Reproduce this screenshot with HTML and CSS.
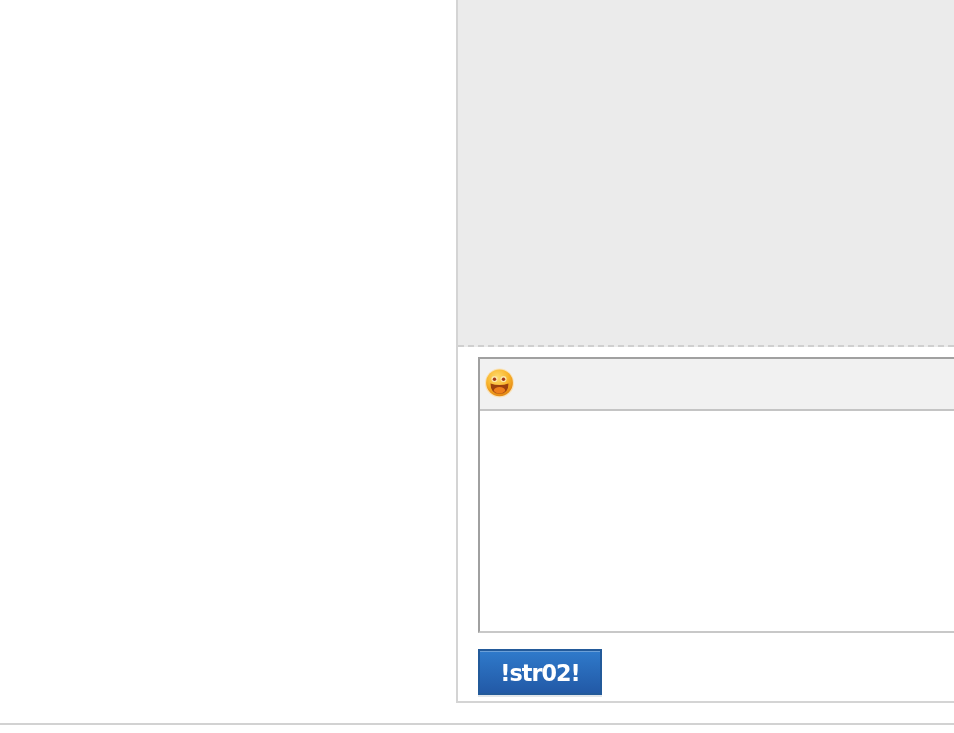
FILE: index.html
```html
<!DOCTYPE html>
<html lang="en">
<head>
<meta charset="utf-8">
<title>Chat</title>
<link rel="stylesheet" href="styles.css">
</head>
<body>
<div class="page">
  <div class="side"></div>
  <div class="panel">
    <div class="messages"></div>
    <div class="compose">
      <div class="editor">
        <div class="toolbar">
          <svg class="smiley" width="30" height="30" viewBox="0 0 30 30" aria-hidden="true">
            <defs>
              <radialGradient id="face" cx="0.42" cy="0.3" r="0.75">
                <stop offset="0" stop-color="#fddc70"/>
                <stop offset="0.55" stop-color="#f9b52c"/>
                <stop offset="1" stop-color="#e07f10"/>
              </radialGradient>
              <filter id="soft" x="-10%" y="-10%" width="120%" height="120%">
                <feGaussianBlur stdDeviation="0.55"/>
              </filter>
            </defs>
            <g filter="url(#soft)">
              <circle cx="14.5" cy="15" r="14.6" fill="#f9e3bb"/>
              <circle cx="14.5" cy="14.8" r="13.4" fill="url(#face)"/>
              <circle cx="9.5" cy="11" r="3.1" fill="#fbe6a8"/>
              <circle cx="18.5" cy="11" r="3.1" fill="#fbe6a8"/>
              <circle cx="9.5" cy="11.2" r="1.7" fill="#a4381c"/>
              <circle cx="18.5" cy="11.2" r="1.7" fill="#a4381c"/>
              <path d="M5.5 15.5 Q14.5 18.5 23.5 15.5 Q23.5 25.8 14.5 25.8 Q5.5 25.8 5.5 15.5Z" fill="#9c3f0e"/>
              <ellipse cx="14.5" cy="22.2" rx="5.6" ry="3.2" fill="#ee7f1c"/>
            </g>
          </svg>
        </div>
        <div class="input"></div>
      </div>
      <button class="send" type="button"><span class="send-label">!str02!</span></button>
    </div>
  </div>
</div>
<div class="footer-rule"></div>
</body>
</html>
```

FILE: styles.css
```css
html, body {
  margin: 0;
  padding: 0;
  background: #fff;
  overflow: hidden;
}
.page {
  display: flex;
  height: 703px;
}
.side {
  width: 456px;
  flex: none;
}
.panel {
  flex: 1;
  min-width: 0;
  display: flex;
  flex-direction: column;
  border-left: 2px solid #d4d4d4;
  border-bottom: 2px solid #d4d4d4;
}
.messages {
  height: 345px;
  flex: none;
  background: #ebebeb;
  border-bottom: 2px dashed #cfcfcf;
}
.compose {
  padding: 10px 0 0 20px;
}
.editor {
  width: 520px;
  border-top: 2px solid #a0a0a0;
  border-left: 2px solid #a0a0a0;
  border-bottom: 2px solid #c8c8c8;
}
.toolbar {
  height: 50px;
  background: #f1f1f1;
  border-bottom: 2px solid #c4c4c4;
  display: flex;
  align-items: center;
  padding-left: 5px;
}
.smiley {
  display: block;
  margin-top: -3px;
}
.input {
  height: 220px;
  background: #fff;
}
.send {
  display: block;
  margin-top: 16px;
  width: 124px;
  height: 46px;
  padding: 2px 0 0;
  border: 2px solid #235a9a;
  background: linear-gradient(#2f7acb, #2259a6);
  box-shadow: inset 0 1px 0 #6a9fd8, 0 2px 0 #e2e6ea;
  color: #fff;
  font-family: "DejaVu Sans", Verdana, sans-serif;
  font-size: 23px;
  font-weight: 700;
  letter-spacing: -1px;
}
.send-label {
  display: inline-block;
  transform: scaleX(0.97);
}
.footer-rule {
  margin-top: 20px;
  height: 2px;
  background: #d2d2d2;
}
```
